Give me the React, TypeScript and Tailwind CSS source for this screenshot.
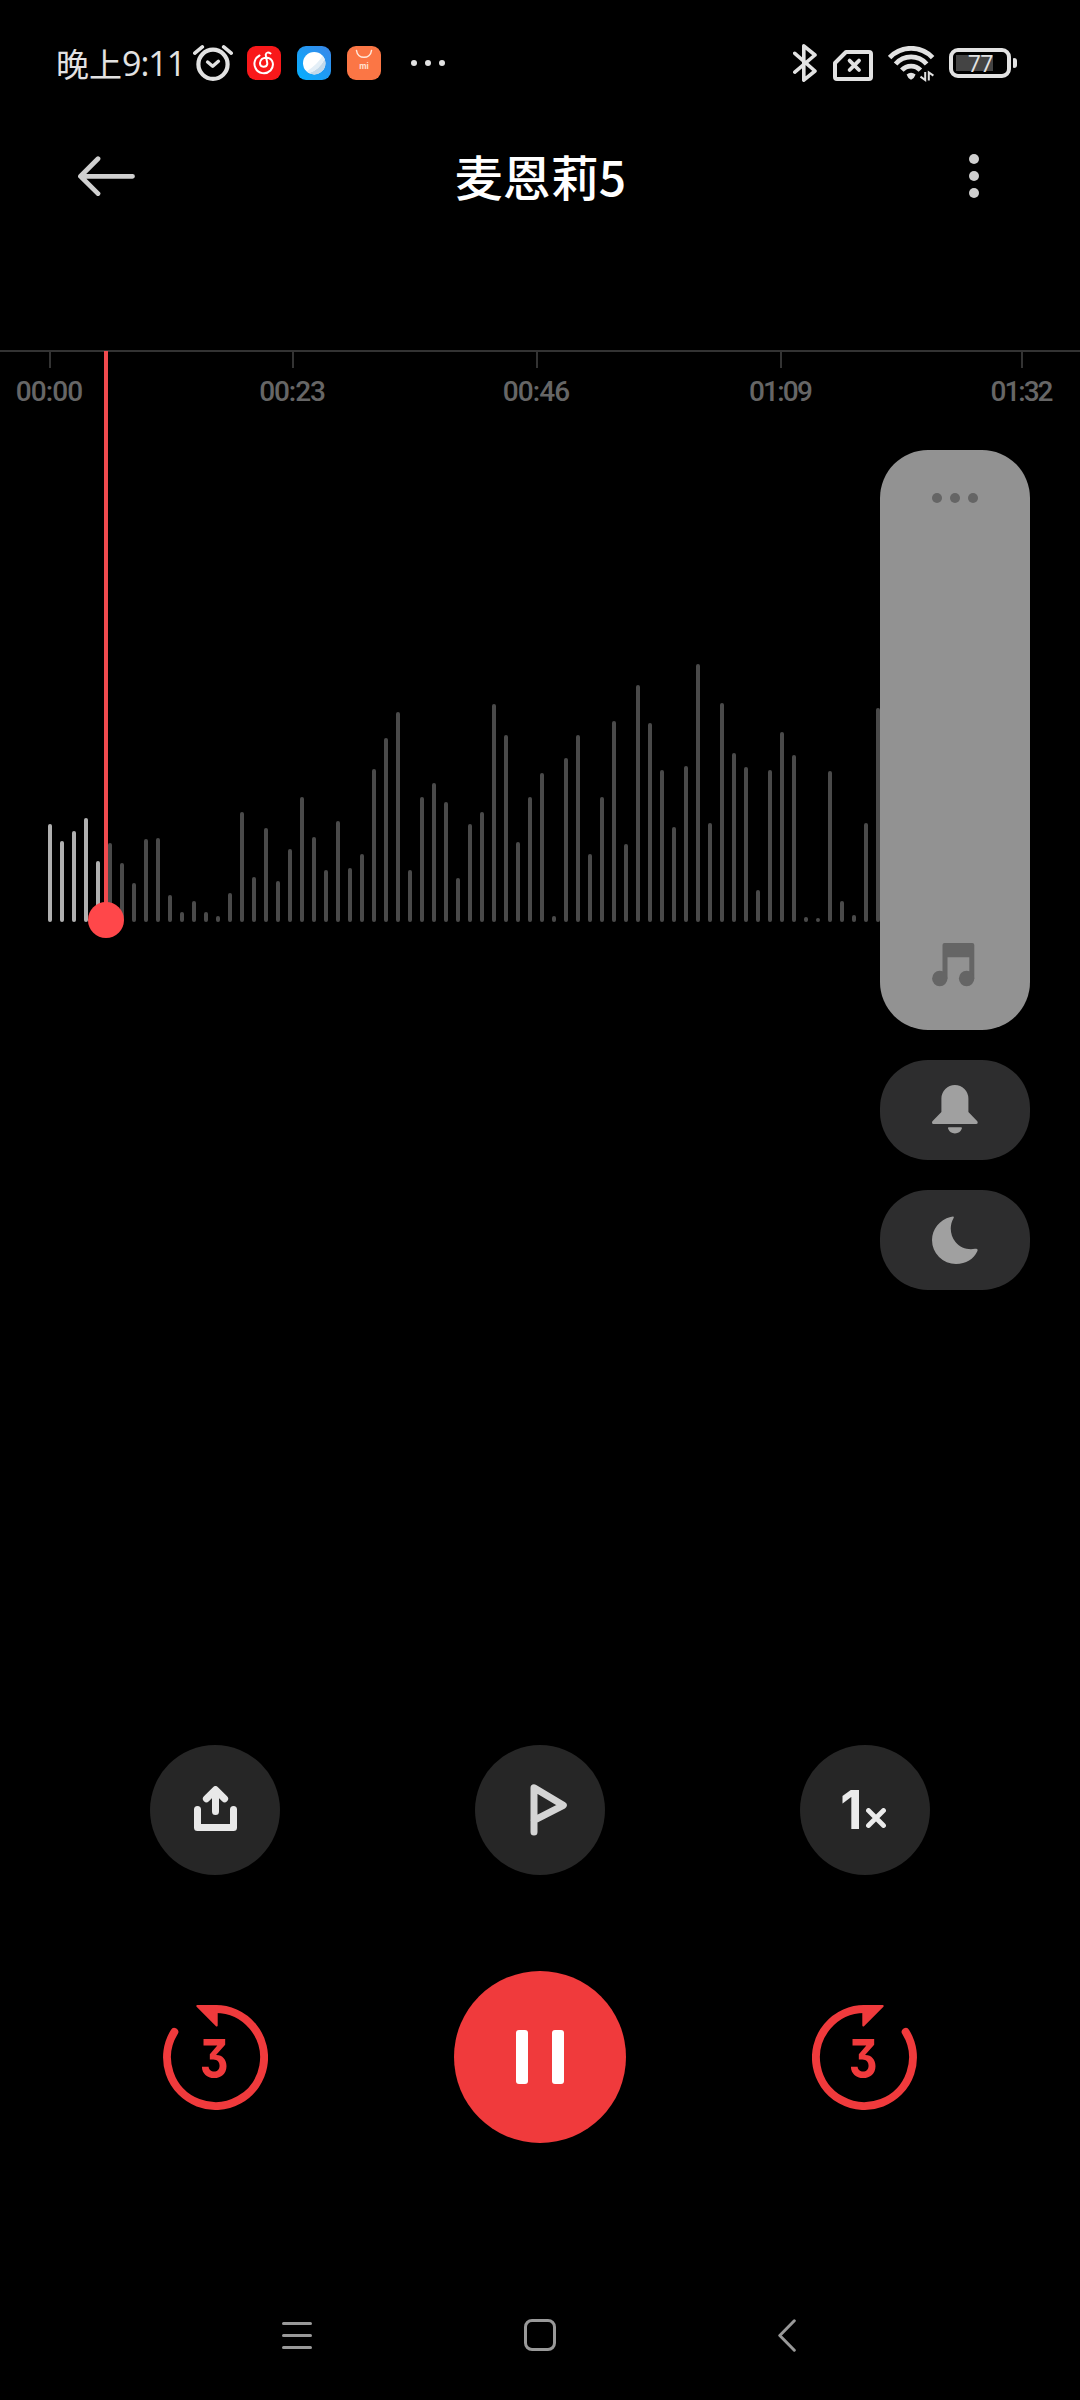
import type { ReactNode } from 'react';

const PLAYED_BARS = 5;

const bars = [
  98, 81, 91, 104, 61, 79, 59, 39, 83, 84, 27, 10, 21, 10, 6, 29, 110, 45, 94, 41, 73, 125, 85, 52,
  101, 54, 68, 153, 184, 210, 52, 125, 139, 120, 44, 98, 110, 218, 187, 80, 125, 149, 6, 164, 187,
  68, 125, 201, 78, 237, 199, 152, 95, 156, 258, 99, 219, 169, 155, 32, 152, 190, 167, 5, 4, 151,
  21, 7, 99, 214,
];

const ticks = [
  { label: '00:00', style: 'w-[244px] tracking-[-0.9px]' },
  { label: '00:23', style: 'w-[242px] tracking-[-1.1px]' },
  { label: '00:46', style: 'w-[246px] tracking-[-0.9px]' },
  { label: '01:09', style: 'w-[242px] tracking-[-1.8px]' },
  { label: '01:32', style: 'w-[240px] tracking-[-2px]' },
];

function StatusBar() {
  return (
    <div className="flex h-[126px] shrink-0 items-center pl-[56px] pr-[63px] text-[#e2e2e2]">
      <div className="flex w-[137px] items-center whitespace-nowrap font-['Noto_Sans_CJK_SC',sans-serif] text-[33px] leading-none">
        晚上
        <span className="font-['Open_Sans',sans-serif] text-[34px] font-medium tracking-[-1px]">9:11</span>
      </div>
      <svg width="40" height="36" viewBox="0 0 40 36" fill="none" stroke="currentColor" strokeLinecap="round" strokeLinejoin="round">
        <circle cx="20" cy="19.3" r="14.6" strokeWidth="4.2" />
        <path d="M1.8 8.2L9.3 1.9M38.2 8.2L30.7 1.9" strokeWidth="3.6" />
        <path d="M14.6 17L19.7 21.3L25.4 16.3" strokeWidth="3.4" />
      </svg>
      <svg className="ml-[14px]" width="34" height="34" viewBox="0 0 34 34" fill="none">
        <rect width="34" height="34" rx="9" fill="#f9181a" />
        <path
          d="M12.5 9.5C7.5 12 6.3 18 8.5 22C11 27.8 19 29 23.5 24.5C27.5 20 26.5 13 20.5 11.8C15.8 10.9 12.8 14 13 17.5C13.2 21.7 19.5 21.8 20.3 18C20.5 16 18.5 10.5 18.8 8.5C19 6.3 21.5 6 23.5 7.5"
          stroke="#fff"
          strokeWidth="2"
          strokeLinecap="round"
        />
      </svg>
      <svg className="ml-4" width="34" height="34" viewBox="0 0 34 34">
        <defs>
          <linearGradient id="sky" x1="0" y1="1" x2="1" y2="0">
            <stop offset="0" stopColor="#04b0ff" />
            <stop offset="1" stopColor="#3a86e8" />
          </linearGradient>
        </defs>
        <rect width="34" height="34" rx="9" fill="url(#sky)" />
        <circle cx="17.2" cy="17.2" r="11.2" fill="#fff" />
        <path d="M27.6 13.2A11.2 11.2 0 0 1 12 27.1Q22 24 27.6 13.2Z" fill="#c3d9ea" />
        <path d="M27.6 13.2A11.2 11.2 0 0 0 25.6 9.8Q20 19 9.6 25.4L12 27.1Q22 24 27.6 13.2Z" fill="#e4eff7" />
      </svg>
      <svg className="ml-4" width="34" height="34" viewBox="0 0 34 34">
        <rect width="34" height="34" rx="9" fill="#fb7645" />
        <path d="M9.5 4.5C10.5 13.5 23.5 13.5 24.5 4.5" fill="none" stroke="#ffe9dc" strokeWidth="1.5" strokeLinecap="round" />
        <text x="17" y="23" textAnchor="middle" fontSize="8" fill="#ffe3d3" className="font-['Inter',sans-serif] font-bold">mi</text>
      </svg>
      <div className="ml-[30px] flex gap-2">
        <span className="size-1.5 rounded-full bg-current" />
        <span className="size-1.5 rounded-full bg-current" />
        <span className="size-1.5 rounded-full bg-current" />
      </div>

      <svg className="ml-auto" width="24" height="38" viewBox="0 0 24 38" fill="none" stroke="currentColor" strokeWidth="3.6" strokeLinecap="round" strokeLinejoin="round">
        <path d="M1.8 9.3L22 27L10.8 36.2V1.8L22 11L1.8 28.2" />
      </svg>
      <svg className="ml-4 mt-1" width="40" height="31" viewBox="0 0 40 31" fill="none" stroke="currentColor" strokeWidth="4" strokeLinejoin="round" strokeLinecap="round">
        <path d="M2 13L13 2H36Q38 2 38 4V27Q38 29 36 29H4Q2 29 2 27Z" />
        <path d="M16.6 10.6L26 20M26 10.6L16.6 20" strokeWidth="3.8" />
      </svg>
      <svg className="ml-[15px] mt-0.5" width="47" height="36" viewBox="0 0 47 36" fill="none" stroke="currentColor" strokeWidth="4.8">
        <path d="M1.6 11.6A29.5 29.5 0 0 1 44.6 11.6" />
        <path d="M7.6 18A20.5 20.5 0 0 1 38.6 18" />
        <path d="M13.8 24.2A12.5 12.5 0 0 1 32.4 24.2" />
        <path d="M18.6 28.5Q23 25 27.6 28.5Q26.6 32 23 33.8Q19.6 32 18.6 28.5Z" fill="currentColor" stroke="none" />
        <path d="M37.2 26V34L32.5 30.6M40.8 34.5V26.5L45.4 29.6" strokeWidth="2" />
      </svg>
      <div className="ml-[14px] flex items-center gap-0.5">
        <div className="flex h-[30px] w-[62px] items-center rounded-[9px] border-4 border-current pl-[3px]">
          <div className="flex h-4 w-[37px] items-center justify-end bg-[#444] font-['Open_Sans',sans-serif] text-[23px] leading-none tracking-[-0.5px]">
            77
          </div>
        </div>
        <span className="h-[10px] w-1 rounded-r-[3px] rounded-l-[1px] bg-current" />
      </div>
    </div>
  );
}

function Header() {
  return (
    <div className="flex h-[100px] shrink-0 items-center justify-between pl-[78px] pr-[101px] text-[#d0d0d0]">
      <svg width="57" height="40" viewBox="0 0 57 40" fill="none" stroke="currentColor" strokeWidth="4.8" strokeLinecap="round" strokeLinejoin="round">
        <path d="M54.5 20.3H2.5M20 2.8L2.5 20.3L20 37.6" />
      </svg>
      <h1 className="ml-[-23px] mt-[-3px] font-['Noto_Sans_CJK_SC',sans-serif] text-[48px] font-medium leading-none text-white">
        麦恩莉5
      </h1>
      <div className="flex flex-col gap-[7px]">
        <span className="size-[10px] rounded-full bg-current" />
        <span className="size-[10px] rounded-full bg-current" />
        <span className="size-[10px] rounded-full bg-current" />
      </div>
    </div>
  );
}

function Timeline() {
  return (
    <div className="mt-[124px] flex h-[60px] shrink-0 overflow-hidden border-t-2 border-[#333]">
      <div className="ml-[-72px] flex">
        {ticks.map((tick) => (
          <div key={tick.label} className={`${tick.style} flex shrink-0 flex-col items-center`}>
            <span className="h-4 w-0.5 bg-[#333]" />
            <span className="mr-0.5 mt-2 font-['Roboto',sans-serif] text-[28px] font-medium leading-8 text-[#666]">
              {tick.label}
            </span>
          </div>
        ))}
      </div>
    </div>
  );
}

function Waveform() {
  return (
    <div className="flex h-[512px] shrink-0 items-end gap-2 pl-12">
      {bars.map((height, i) => (
        <span
          key={i}
          className={`w-1 shrink-0 rounded-full ${i < PLAYED_BARS ? 'bg-[#b0b0b0]' : 'bg-[#4a4a4a]'}`}
          style={{ height }}
        />
      ))}
    </div>
  );
}

function Playhead() {
  return (
    <div className="absolute left-[88px] top-[351px] flex w-9 flex-col items-center">
      <span className="h-[552px] w-1 bg-[#f04a4e]" />
      <span className="mt-[-1px] size-9 rounded-full bg-[#ff474a]" />
    </div>
  );
}

function VolumePanel() {
  return (
    <div className="absolute left-[880px] top-[450px] flex w-[150px] flex-col gap-[30px]">
      <div className="flex h-[580px] flex-col items-center justify-between rounded-[48px] bg-[#929292] pb-[43px] pt-[43px] text-[#656565]">
        <div className="flex gap-2">
          <span className="size-[10px] rounded-full bg-current" />
          <span className="size-[10px] rounded-full bg-current" />
          <span className="size-[10px] rounded-full bg-current" />
        </div>
        <svg className="mr-1" width="43" height="44" viewBox="0 0 43 44" fill="currentColor">
          <path d="M12.5 0H40.3Q42.3 0 42.3 2V35.5H37.3V14.3H15.5V35.5H10.5V2Q10.5 0 12.5 0Z" />
          <circle cx="7.8" cy="35.5" r="7.7" />
          <circle cx="34.6" cy="35.5" r="7.7" />
        </svg>
      </div>
      <div className="flex h-[100px] items-center justify-center rounded-[48px] bg-[#2d2d2e] text-[#a0a0a0]">
        <svg className="mr-px" width="46" height="50" viewBox="0 0 46 50" fill="currentColor">
          <path d="M9.4 13.5A13.5 13.5 0 0 1 36.4 13.5V27L45.3 36.2Q46.5 39 44 39H1.6Q-.8 39 .4 36.2L9.4 27Z" />
          <path d="M16.7 42.3H29.2Q30.4 42.3 29.8 43.8A7.4 7.4 0 0 1 16.1 43.8Q15.5 42.3 16.7 42.3Z" />
        </svg>
      </div>
      <div className="flex h-[100px] items-center justify-center rounded-[48px] bg-[#2d2d2e] text-[#a0a0a0]">
        <svg width="46" height="48" viewBox="0 0 46 48" fill="currentColor">
          <path d="M18.5 .9Q23 -.6 21.5 2.2C17.2 9.5 18 19.5 23.5 26C28.5 32 35.5 34 43 32.8Q46.5 32.2 45.3 35.3C41.8 43.2 34 48 24 48A24 24 0 0 1 0 24C0 12.8 7.5 3.8 18.5 .9Z" />
        </svg>
      </div>
    </div>
  );
}

function RoundButton({ children }: { children: ReactNode }) {
  return (
    <button className="flex size-[130px] items-center justify-center rounded-full bg-[#262626]">
      {children}
    </button>
  );
}

function SkipButton({ forward = false }: { forward?: boolean }) {
  return (
    <button className="relative flex size-[105px] items-center justify-center text-[#f03a3c]">
      <svg className={`absolute inset-0 ${forward ? '-scale-x-100' : ''}`} width="105" height="105" viewBox="0 0 105 105" fill="none">
        <path d="M11.3 27A48.5 48.5 0 1 0 52.5 4" stroke="currentColor" strokeWidth="8" strokeLinecap="round" />
        <path d="M34.3 1H53.7V20.5Z" fill="currentColor" stroke="currentColor" strokeWidth="2" strokeLinejoin="round" />
      </svg>
      <span className="mr-0.5 mt-[5px] scale-x-[0.84] font-['Inter',sans-serif] text-[53px] font-bold leading-none [font-feature-settings:'cv09']">
        3
      </span>
    </button>
  );
}

function Controls() {
  return (
    <>
      <div className="mt-[823px] flex shrink-0 justify-between px-[150px]">
        <RoundButton>
          <svg className="mt-[-3px]" width="43" height="45" viewBox="0 0 43 45" fill="none" stroke="#e8e8e8" strokeWidth="7" strokeLinecap="round" strokeLinejoin="round">
            <path d="M3.5 23.5V41.5H39.5V23.5" />
            <path d="M21.5 25.5V6M12.4 12.8L21.5 3.7L30.6 12.8" />
          </svg>
        </RoundButton>
        <RoundButton>
          <svg className="ml-[17px]" width="37" height="52" viewBox="0 0 37 52" fill="none" stroke="#d4d4d4" strokeWidth="7" strokeLinecap="round" strokeLinejoin="round">
            <path d="M4 48V3.8L33.3 21.3L4 36.3" />
          </svg>
        </RoundButton>
        <RoundButton>
          <span className="mr-[5px] flex items-end text-[#ebebeb]">
            <span className="origin-right scale-x-[0.95] font-['Inter',sans-serif] text-[54px] font-bold leading-none">1</span>
            <svg className="mb-[9px] ml-[3px]" width="20" height="20" viewBox="0 0 20 20" fill="none" stroke="currentColor" strokeWidth="4.8" strokeLinecap="round">
              <path d="M2.5 2.5L17.5 17.5M17.5 2.5L2.5 17.5" />
            </svg>
          </span>
        </RoundButton>
      </div>
      <div className="mt-24 flex shrink-0 items-center justify-between px-[163px]">
        <SkipButton />
        <button className="flex size-[172px] items-center justify-center gap-6 rounded-full bg-[#f03a3c]">
          <span className="h-[54px] w-3 rounded-[3px] bg-white" />
          <span className="h-[54px] w-3 rounded-[3px] bg-white" />
        </button>
        <SkipButton forward />
      </div>
    </>
  );
}

function NavBar() {
  return (
    <div className="mt-auto flex h-[130px] shrink-0 items-center pl-[282px] text-[#999]">
      <div className="flex w-[30px] flex-col gap-[9px]">
        <span className="h-[3px] rounded-full bg-current" />
        <span className="h-[3px] rounded-full bg-current" />
        <span className="h-[3px] rounded-full bg-current" />
      </div>
      <span className="ml-[212px] size-8 rounded-[8px] border-[3px] border-current" />
      <svg className="ml-[222px]" width="18" height="33" viewBox="0 0 18 33" fill="none" stroke="currentColor" strokeWidth="3" strokeLinecap="round" strokeLinejoin="round">
        <path d="M16.3 1.8L1.8 16.5L16.3 31.2" />
      </svg>
    </div>
  );
}

export default function App() {
  return (
    <div className="relative flex h-[2400px] w-[1080px] flex-col overflow-hidden bg-black">
      <StatusBar />
      <Header />
      <Timeline />
      <Waveform />
      <Playhead />
      <VolumePanel />
      <Controls />
      <NavBar />
    </div>
  );
}
